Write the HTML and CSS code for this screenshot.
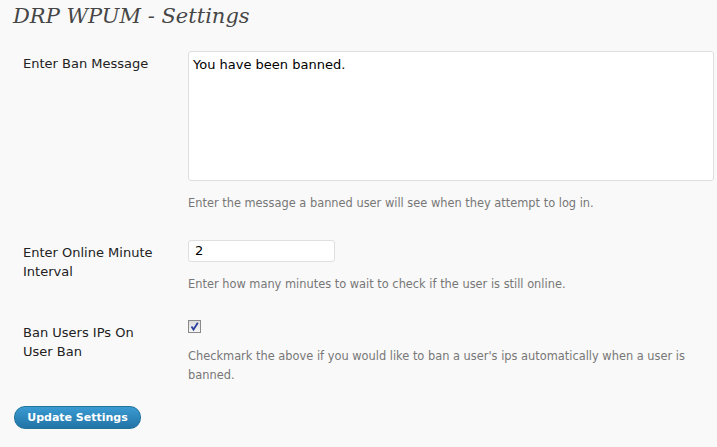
FILE: index.html
```html
<!DOCTYPE html>
<html>
<head>
<meta charset="utf-8">
<link rel="stylesheet" href="styles.css">
</head>
<body>
<div class="wrap">
  <h2 class="title">DRP WPUM - Settings</h2>
  <form class="form">
    <div class="row row-msg">
      <div class="label">Enter Ban Message</div>
      <div class="field">
        <div class="textarea">You have been banned.</div>
        <p class="desc">Enter the message a banned user will see when they attempt to log in.</p>
      </div>
    </div>
    <div class="row row-min">
      <div class="label">Enter Online Minute Interval</div>
      <div class="field">
        <div class="input">2</div>
        <p class="desc">Enter how many minutes to wait to check if the user is still online.</p>
      </div>
    </div>
    <div class="row row-ban">
      <div class="label">Ban Users IPs On User Ban</div>
      <div class="field">
        <span class="checkbox"><svg width="11" height="11" viewBox="0 0 11 11"><path d="M2.5 5.5 L4.5 8.5 L8.8 1.8" fill="none" stroke="#2a3f9e" stroke-width="1.8"/></svg></span>
        <p class="desc">Checkmark the above if you would like to ban a user's ips automatically when a user is banned.</p>
      </div>
    </div>
    <div class="submit">
      <span class="button">Update Settings</span>
    </div>
  </form>
</div>
</body>
</html>
```
FILE: styles.css
```css
html, body {
  margin: 0;
  padding: 0;
  background: #f9f9f9;
}
body {
  font-family: "DejaVu Sans", Verdana, sans-serif;
  font-size: 13px;
  color: #333;
}
.wrap {
  padding-left: 13px;
}
.title {
  margin: 0;
  padding-top: 1px;
  font-family: "DejaVu Serif", Georgia, serif;
  font-style: italic;
  font-weight: normal;
  font-size: 21px;
  line-height: 30px;
  color: #464646;
}
.form {
  margin-top: 20px;
}
.row {
  display: grid;
  grid-template-columns: 175px 1fr;
}
.label {
  padding-left: 10px;
  padding-top: 3px;
  line-height: 19px;
  color: #222;
  width: 140px;
}
.field {
  min-width: 0;
}
.textarea {
  box-sizing: border-box;
  width: 526px;
  height: 130px;
  background: #fff;
  border: 1px solid #dfdfdf;
  border-radius: 3px;
  padding: 5px 4px;
  font-size: 13px;
  color: #000;
  line-height: 16px;
}
.desc {
  margin: 0;
  color: #777;
  font-size: 11.4px;
  line-height: 19px;
}
.row-msg .desc {
  margin-top: 13px;
}
.row-min {
  margin-top: 27px;
}
.input {
  box-sizing: border-box;
  width: 147px;
  height: 22px;
  background: #fff;
  border: 1px solid #dfdfdf;
  border-radius: 3px;
  padding: 2px 6px;
  font-size: 13px;
  line-height: 16px;
  color: #000;
}
.row-min .desc {
  margin-top: 13px;
}
.row-ban {
  margin-top: 26px;
}
.checkbox {
  display: block;
  box-sizing: border-box;
  width: 13px;
  height: 13px;
  border: 1px solid #8a8a8a;
  background: linear-gradient(#dcdcdc, #f6f6f6);
}
.checkbox svg {
  display: block;
}
.row-ban .desc {
  margin-top: 14px;
  line-height: 19px;
}
.submit {
  margin-top: 21px;
}
.button {
  display: inline-block;
  box-sizing: border-box;
  height: 23px;
  width: 127px;
  margin-left: 1px;
  text-align: center;
  border: 1px solid #21759b;
  border-radius: 11px;
  background: linear-gradient(#3a9bd2, #2273a6);
  color: #fff;
  font-weight: bold;
  font-size: 11px;
  line-height: 21px;
}
```
